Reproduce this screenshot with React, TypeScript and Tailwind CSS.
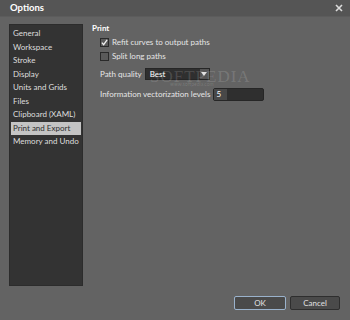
import React from "react";

const items = [
  "General",
  "Workspace",
  "Stroke",
  "Display",
  "Units and Grids",
  "Files",
  "Clipboard (XAML)",
  "Print and Export",
  "Memory and Undo",
];

function Check({ checked }: { checked?: boolean }) {
  return (
    <div className="w-[9px] h-[9px] border border-[#2a2a2a] bg-[#5a5a5a] flex items-center justify-center shrink-0">
      {checked && (
        <svg width="7" height="7" viewBox="0 0 8 8">
          <path d="M1 4.2 L3 6.5 L7 1" stroke="#f0f0f0" strokeWidth="1.5" fill="none" />
        </svg>
      )}
    </div>
  );
}

export default function App() {
  return (
    <div
      className="w-[350px] h-[320px] bg-[#636363] flex flex-col text-[8px] text-[#e6e6e6] relative overflow-hidden whitespace-nowrap"
      style={{ fontFamily: 'Lato, "Noto Sans", sans-serif' }}
    >
      <div className="h-[17px] bg-[#555555] flex items-center justify-between pl-[10px] pr-[7px] border-b border-[#5c5c5c]">
        <span className="font-bold text-white text-[9.5px]">Options</span>
        <svg width="8" height="8" viewBox="0 0 8 8">
          <path d="M1 1 L7 7 M7 1 L1 7" stroke="#dcdcdc" strokeWidth="1.6" />
        </svg>
      </div>
      <div className="flex flex-1 pt-[7px] pl-[9px]">
        <div className="w-[74px] h-[262px] bg-[#333333] border border-[#2c2c2c] pt-[2px] px-[1px] flex flex-col">
          {items.map((it) => (
            <div
              key={it}
              className={
                "h-[13.5px] leading-[13.5px] pl-[2px] " +
                (it === "Print and Export" ? "bg-[#c4c4c4] text-[#2e2e2e]" : "text-[#dedede]")
              }
            >
              {it}
            </div>
          ))}
        </div>
        <div className="flex-1 pl-[9px] flex flex-col">
          <div className="font-bold text-white leading-[12px] mt-[-2px]">Print</div>
          <div className="pl-[8px] flex flex-col">
            <div className="flex items-center gap-[3px] h-[14px] mt-[1px]">
              <Check checked />
              <span>Refit curves to output paths</span>
            </div>
            <div className="flex items-center gap-[3px] h-[14px]">
              <Check />
              <span>Split long paths</span>
            </div>
            <div className="flex items-center gap-[3px] h-[18px] mt-[2px]">
              <span>Path quality</span>
              <div className="w-[65px] h-[12px] bg-[#2f2f2f] border border-[#262626] flex items-center justify-between pl-[4px]">
                <span className="text-white">Best</span>
                <div className="w-[9px] h-full bg-[#555] flex items-center justify-center">
                  <svg width="6" height="4" viewBox="0 0 6 4">
                    <path d="M0 0 L6 0 L3 4 Z" fill="#e0e0e0" />
                  </svg>
                </div>
              </div>
            </div>
            <div className="flex items-center gap-[3px] h-[18px] mt-[2px]">
              <span>Information vectorization levels</span>
              <div className="w-[51px] h-[13px] bg-[#2f2f2f] border border-[#262626] rounded-[2px] flex items-center">
                <div className="w-[13px] h-full bg-[#484848] text-white pl-[2px] leading-[11px]">5</div>
              </div>
            </div>
          </div>
        </div>
      </div>
      <div className="flex justify-end gap-[4px] pr-[10px] pb-[10px] pt-[8px]">
        <div className="w-[52px] h-[14px] bg-[#4a4a4a] border border-[#9ab2cc] rounded-[2px] flex items-center justify-center text-[#e0e0e0]">
          OK
        </div>
        <div className="w-[50px] h-[14px] bg-[#4a4a4a] border border-[#2e2e2e] rounded-[2px] flex items-center justify-center text-[#e0e0e0]">
          Cancel
        </div>
      </div>
      <div
        className="absolute left-[150px] top-[64px] text-[17px] tracking-[1px] text-white/15 pointer-events-none"
        style={{ fontFamily: '"Liberation Serif", serif' }}
      >
        SOFTPEDIA
      </div>
      <div className="absolute left-[170px] top-[81px] text-[5px] text-white/15 pointer-events-none">
        www.softpedia.com
      </div>
    </div>
  );
}
